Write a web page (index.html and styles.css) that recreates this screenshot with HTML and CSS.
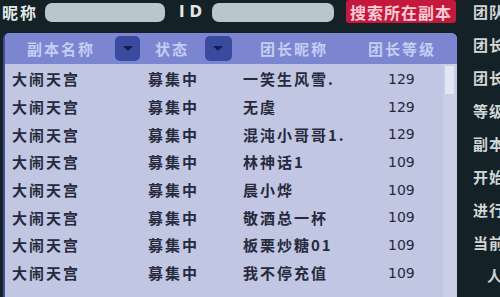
FILE: index.html
```html
<!DOCTYPE html>
<html lang="zh-CN">
<head>
  <meta charset="UTF-8">
  <title>副本队伍</title>
  <link rel="stylesheet" href="styles.css">
</head>
<body>
  <div class="page">
    <div class="main">
      <div class="search">
        <span class="label">昵称</span>
        <input class="field field-name" type="text">
        <span class="label label-id">ID</span>
        <input class="field field-id" type="text">
        <button class="btn-search">搜索所在副本</button>
      </div>
      <div class="panel">
        <div class="thead">
          <span class="th th-name">副本名称</span>
          <span class="drop drop-1"></span>
          <span class="th th-state">状态</span>
          <span class="drop drop-2"></span>
          <span class="th th-leader">团长昵称</span>
          <span class="th th-level">团长等级</span>
        </div>
        <div class="tbody">
          <div class="rows" id="rows"></div>
          <div class="scroll"><div class="thumb"></div></div>
        </div>
      </div>
    </div>
    <div class="side">
      <div class="side-item">团队名称</div>
      <div class="side-item">团长昵称</div>
      <div class="side-item">团长等级</div>
      <div class="side-item">等级要求</div>
      <div class="side-item">副本名称</div>
      <div class="side-item">开始时间</div>
      <div class="side-item">进行状态</div>
      <div class="side-item">当前人数</div>
      <div class="side-item side-last">人数</div>
    </div>
  </div>
  <script>
    const teams = [
      ['大闹天宫', '募集中', '一笑生风雪.', 129],
      ['大闹天宫', '募集中', '无虞', 129],
      ['大闹天宫', '募集中', '混沌小哥哥1.', 129],
      ['大闹天宫', '募集中', '林神话1', 109],
      ['大闹天宫', '募集中', '晨小烨', 109],
      ['大闹天宫', '募集中', '敬酒总一杯', 109],
      ['大闹天宫', '募集中', '板栗炒糖01', 109],
      ['大闹天宫', '募集中', '我不停充值', 109]
    ];

    const rows = document.getElementById('rows');
    teams.forEach(t => {
      const row = document.createElement('div');
      row.className = 'row';
      row.innerHTML = `
        <span>${t[0]}</span>
        <span>${t[1]}</span>
        <span>${t[2]}</span>
        <span class="num">${t[3]}</span>
      `;
      rows.appendChild(row);
    });
  </script>
</body>
</html>
```

FILE: styles.css
```css
body { margin: 0; background: #142126; font-family: "Noto Sans CJK SC", "Noto Sans", sans-serif; overflow: hidden; }
.page { display: flex; width: 500px; height: 297px; overflow: hidden; }
.main { width: 458px; flex: none; }
.search { display: flex; align-items: center; height: 24px; }
.label { color: #e3e8e6; font-size: 16px; font-weight: bold; letter-spacing: 2px; margin-left: 2px; line-height: 24px; }
.label-id { font-size: 15px; letter-spacing: 5px; margin-left: 14px; font-family: "DejaVu Sans", sans-serif; }
.field { height: 19px; border: none; border-radius: 7px; background: #b9c7cd; padding: 0; margin-top: 1px; }
.field-name { width: 120px; margin-left: 7px; }
.field-id { width: 122px; margin-left: 5px; }
.btn-search { height: 23px; width: 110px; margin: 0 0 0 12px; padding: 0; border: none; border-radius: 3px; background: #c4193c; color: #f6cdd6; font-family: inherit; font-size: 16px; font-weight: bold; letter-spacing: 1px; align-self: flex-start; }
.panel { margin: 9px 0 0 3px; width: 454px; height: 264px; border-radius: 6px 6px 0 0; overflow: hidden; background: #c1c6e2; border-left: 2px solid #3f4c8e; box-sizing: border-box; }
.thead { display: flex; align-items: center; height: 31px; background: #7b85d0; }
.th { color: #c6cdf4; font-size: 15px; font-weight: bold; letter-spacing: 2px; }
.th-name { margin-left: 22px; width: 68px; }
.drop { width: 25px; height: 25px; border-radius: 5px; background: #3a4a9f; position: relative; }
.drop::after { content: ""; position: absolute; left: 8px; top: 10px; border-left: 5px solid transparent; border-right: 5px solid transparent; border-top: 5px solid #141c4a; }
.drop-1 { margin-left: 20px; }
.th-state { margin-left: 15px; width: 35px; }
.drop-2 { margin-left: 15px; width: 27px; }
.th-leader { margin-left: 28px; width: 70px; }
.th-level { margin-left: 38px; }
.tbody { display: flex; height: 233px; }
.rows { flex: 1; padding-top: 1px; }
.row { display: grid; grid-template-columns: 136px 95px 145px 1fr; padding-left: 7px; height: 27.7px; align-items: center; color: #262a3c; font-size: 15px; font-weight: bold; letter-spacing: 2px; }
.num { letter-spacing: 0; font-weight: normal; font-family: "DejaVu Sans", sans-serif; font-size: 14px; }
.scroll { width: 14px; background: #c9cde6; }
.thumb { margin: 2px 0 0 2px; width: 9px; height: 28px; background: #e2e6f4; border-radius: 1px; }
.side { flex: none; margin-left: 15px; display: flex; flex-direction: column; gap: 9px; white-space: nowrap; }
.side-item { color: #d2d6d6; font-size: 15px; font-weight: bold; letter-spacing: 1px; line-height: 24px; }
.side-last { padding-left: 14px; }
```
